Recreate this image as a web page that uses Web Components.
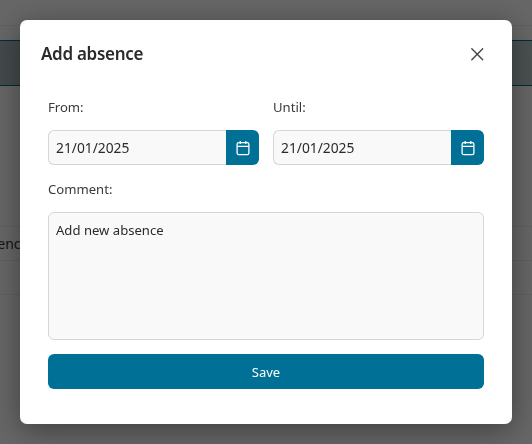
<!DOCTYPE html>
<html>
<head>
<meta charset="utf-8">
<title>Add absence</title>
<style>
  html, body { margin: 0; height: 100%; overflow: hidden; background: #fff; }
  body { font-family: "Noto Sans", "Open Sans", sans-serif; color: #2b2b2b; }
</style>
</head>
<body>
<backdrop-page></backdrop-page>
<modal-overlay>
  <absence-dialog heading="Add absence">
    <div style="display:flex;gap:14px">
      <date-field label="From:" value="21/01/2025"></date-field>
      <date-field label="Until:" value="21/01/2025"></date-field>
    </div>
    <comment-field label="Comment:" value="Add new absence"></comment-field>
    <save-button>Save</save-button>
  </absence-dialog>
</modal-overlay>

<script>
class BackdropPage extends HTMLElement {
  constructor() {
    super()
    this.attachShadow({ mode: 'open' })
    this.shadowRoot.innerHTML = `
      <style>
        :host { display: block; height: 444px; overflow: hidden; background: #fff; font-size: 14px; color: #333; }
        .top { height: 25px; border-bottom: 1px solid #eee; box-sizing: content-box; }
        .gap { height: 14px; }
        .band { height: 44px; background: linear-gradient(90deg, #a9b6ba, #bcc9cc); border-top: 1px solid #006f94; border-bottom: 1px solid #006f94; }
        .space { height: 140px; }
        .row { height: 33px; border-top: 1px solid #eee; display: flex; align-items: center; white-space: nowrap; }
        .row span { margin-left: -27px; }
        .end { border-top: 1px solid #eee; }
      </style>
      <div class="top"></div>
      <div class="gap"></div>
      <div class="band"></div>
      <div class="space"></div>
      <div class="row"><span>Absence</span></div>
      <div class="row"></div>
      <div class="end"></div>
    `
  }
}

class ModalOverlay extends HTMLElement {
  constructor() {
    super()
    this.attachShadow({ mode: 'open' })
    this.shadowRoot.innerHTML = `
      <style>
        :host { position: fixed; inset: 0; display: flex; padding: 20px; box-sizing: border-box; background: rgba(0,0,0,.6); }
      </style>
      <slot></slot>
    `
  }
}

class AbsenceDialog extends HTMLElement {
  constructor() {
    super()
    this.attachShadow({ mode: 'open' })
    this.shadowRoot.innerHTML = `
      <style>
        :host { display: block; flex: 1; height: 404px; background: #fff; border-radius: 7px; box-shadow: 0 6px 30px rgba(0,0,0,.4); box-sizing: border-box; }
        header { display: flex; justify-content: space-between; align-items: center; height: 68px; padding: 0 27px 0 21px; }
        h2 { margin: 0; font-size: 17px; letter-spacing: -.3px; font-weight: 600; color: #2b2b2b; line-height: 24px; }
        button { all: unset; display: flex; width: 16px; height: 16px; }
        .body { padding: 1px 28px 0; display: flex; flex-direction: column; }
      </style>
      <header>
        <h2></h2>
        <button aria-label="Close">
          <svg width="16" height="16" viewBox="0 0 16 16" fill="none" stroke="#444" stroke-width="1.4" stroke-linecap="round"><path d="M2.8 2.8l10.9 10.9M13.7 2.8L2.8 13.7"/></svg>
        </button>
      </header>
      <div class="body"><slot></slot></div>
    `
    this.shadowRoot.querySelector('h2').textContent = this.getAttribute('heading')
  }
}

class DateField extends HTMLElement {
  constructor() {
    super()
    this.attachShadow({ mode: 'open' })
    this.shadowRoot.innerHTML = `
      <style>
        :host { display: block; flex: 1; min-width: 0; font-size: 13.1px; }
        label { display: block; height: 35px; padding-top: 9px; line-height: 18px; box-sizing: border-box; margin-bottom: 6px; color: #3a3a3a; }
        .group { display: flex; height: 35px; }
        .value { flex: 1; box-sizing: border-box; background: #f9f9f9; border: 1px solid #d6d6d6; border-right: 0; border-radius: 6px 0 0 6px; padding: 0 7px; font-size: 13.8px; line-height: 33px; color: #2b2b2b; }
        .btn { width: 33px; background: #007096; border-radius: 0 6px 6px 0; display: flex; align-items: center; justify-content: center; }
      </style>
      <label></label>
      <div class="group">
        <div class="value"></div>
        <div class="btn">
          <svg width="14" height="16" viewBox="0 0 14 16" fill="none" stroke="#fff" stroke-width="1.3"><rect x="1.1" y="2.6" width="11.8" height="12" rx="1.6"/><path d="M1.1 6.4h11.8M4.2 .9v3M9.8 .9v3"/></svg>
        </div>
      </div>
    `
    this.shadowRoot.querySelector('label').textContent = this.getAttribute('label')
    this.shadowRoot.querySelector('.value').textContent = this.getAttribute('value')
  }
}

class CommentField extends HTMLElement {
  constructor() {
    super()
    this.attachShadow({ mode: 'open' })
    this.shadowRoot.innerHTML = `
      <style>
        :host { display: block; font-size: 13.1px; }
        label { display: block; height: 47px; padding-top: 15px; line-height: 18px; box-sizing: border-box; color: #3a3a3a; }
        .area { height: 128px; box-sizing: border-box; background: #f9f9f9; border: 1px solid #d6d6d6; border-radius: 6px; padding: 8px 7px; line-height: 18px; color: #2b2b2b; }
      </style>
      <label></label>
      <div class="area"></div>
    `
    this.shadowRoot.querySelector('label').textContent = this.getAttribute('label')
    this.shadowRoot.querySelector('.area').textContent = this.getAttribute('value')
  }
}

class SaveButton extends HTMLElement {
  constructor() {
    super()
    this.attachShadow({ mode: 'open' })
    this.shadowRoot.innerHTML = `
      <style>
        :host { display: flex; align-items: center; justify-content: center; height: 35px; margin-top: 14px; background: #007096; color: #fff; border-radius: 6px; font-size: 13px; }
      </style>
      <slot></slot>
    `
  }
}

customElements.define('backdrop-page', BackdropPage)
customElements.define('modal-overlay', ModalOverlay)
customElements.define('absence-dialog', AbsenceDialog)
customElements.define('date-field', DateField)
customElements.define('comment-field', CommentField)
customElements.define('save-button', SaveButton)
</script>
</body>
</html>
